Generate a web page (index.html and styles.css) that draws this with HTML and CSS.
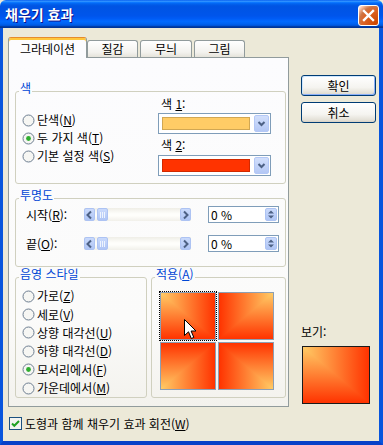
FILE: index.html
```html
<!DOCTYPE html>
<html lang="ko">
<head>
<meta charset="utf-8">
<title>채우기 효과</title>
<link rel="stylesheet" href="styles.css">
</head>
<body>
<svg class="defs" width="0" height="0" aria-hidden="true">
  <defs>
    <linearGradient id="gH" x1="0" y1="0" x2="1" y2="0"><stop offset="0" stop-color="#FFCC66"/><stop offset="1" stop-color="#FF3300"/></linearGradient>
    <linearGradient id="gHr" x1="1" y1="0" x2="0" y2="0"><stop offset="0" stop-color="#FFCC66"/><stop offset="1" stop-color="#FF3300"/></linearGradient>
    <linearGradient id="gV" x1="0" y1="0" x2="0" y2="1"><stop offset="0" stop-color="#FFCC66"/><stop offset="1" stop-color="#FF3300"/></linearGradient>
    <linearGradient id="gVr" x1="0" y1="1" x2="0" y2="0"><stop offset="0" stop-color="#FFCC66"/><stop offset="1" stop-color="#FF3300"/></linearGradient>
  </defs>
</svg>
<div class="window">
  <div class="titlebar">
    <span class="title">채우기 효과</span>
    <span class="close">
      <svg width="21" height="21" viewBox="0 0 21 21"><path d="M6 6 L15 15 M15 6 L6 15" stroke="#fff" stroke-width="2.4" stroke-linecap="square"/></svg>
    </span>
  </div>
  <div class="client">
    <div class="top">
      <div class="tabs-col">
        <div class="tabs">
          <div class="tab active">그라데이션</div>
          <div class="tab t2">질감</div>
          <div class="tab t3">무늬</div>
          <div class="tab t4">그림</div>
        </div>
        <div class="panel">
          <fieldset class="grp colors">
            <legend>색</legend>
            <div class="body">
              <div class="radios">
                <div class="radio"><svg width="13" height="13" viewBox="0 0 13 13"><circle cx="6.5" cy="6.5" r="5.5" fill="#F6F6F3" stroke="#6D7E91"/></svg>단색(<u>N</u>)</div>
                <div class="radio"><svg width="13" height="13" viewBox="0 0 13 13"><circle cx="6.5" cy="6.5" r="5.5" fill="#F6F6F3" stroke="#6D7E91"/><circle cx="6.5" cy="6.5" r="2.4" fill="#2FAE2F"/></svg>두 가지 색(<u>T</u>)</div>
                <div class="radio"><svg width="13" height="13" viewBox="0 0 13 13"><circle cx="6.5" cy="6.5" r="5.5" fill="#F6F6F3" stroke="#6D7E91"/></svg>기본 설정 색(<u>S</u>)</div>
              </div>
              <div class="pickers">
                <div class="lbl">색 <u>1</u>:</div>
                <div class="combo">
                  <span class="swatch sw1"></span>
                  <span class="drop"><svg width="13" height="15" viewBox="0 0 13 15"><path d="M3.5 6 L6.5 9 L9.5 6" stroke="#4D6185" stroke-width="2" fill="none"/></svg></span>
                </div>
                <div class="lbl second">색 <u>2</u>:</div>
                <div class="combo">
                  <span class="swatch sw2"></span>
                  <span class="drop"><svg width="13" height="15" viewBox="0 0 13 15"><path d="M3.5 6 L6.5 9 L9.5 6" stroke="#4D6185" stroke-width="2" fill="none"/></svg></span>
                </div>
              </div>
            </div>
          </fieldset>

          <fieldset class="grp trans">
            <legend>투명도</legend>
            <div class="body">
              <div class="trow">
                <span class="tlabel">시작(<u>R</u>):</span>
                <div class="scroll">
                  <span class="sb-btn"><svg width="9" height="10" viewBox="0 0 9 10"><path d="M6 1.5 L2.5 5 L6 8.5" stroke="#4D6185" stroke-width="2" fill="none"/></svg></span>
                  <span class="sb-btn thumb"><svg width="7" height="6" viewBox="0 0 7 6"><path d="M1.5 0 V6 M3.5 0 V6 M5.5 0 V6" stroke="#EEF4FE" stroke-width="1"/></svg></span>
                  <span class="track"></span>
                  <span class="sb-btn"><svg width="9" height="10" viewBox="0 0 9 10"><path d="M3 1.5 L6.5 5 L3 8.5" stroke="#4D6185" stroke-width="2" fill="none"/></svg></span>
                </div>
                <div class="edit"><span class="val">0 %</span><span class="spin"><svg width="10" height="13" viewBox="0 0 10 13"><path d="M2 5.5 L5 2.5 L8 5.5 Z M2 7.5 L5 10.5 L8 7.5 Z" fill="#4D6185"/></svg></span></div>
              </div>
              <div class="trow">
                <span class="tlabel">끝(<u>O</u>):</span>
                <div class="scroll">
                  <span class="sb-btn"><svg width="9" height="10" viewBox="0 0 9 10"><path d="M6 1.5 L2.5 5 L6 8.5" stroke="#4D6185" stroke-width="2" fill="none"/></svg></span>
                  <span class="sb-btn thumb"><svg width="7" height="6" viewBox="0 0 7 6"><path d="M1.5 0 V6 M3.5 0 V6 M5.5 0 V6" stroke="#EEF4FE" stroke-width="1"/></svg></span>
                  <span class="track"></span>
                  <span class="sb-btn"><svg width="9" height="10" viewBox="0 0 9 10"><path d="M3 1.5 L6.5 5 L3 8.5" stroke="#4D6185" stroke-width="2" fill="none"/></svg></span>
                </div>
                <div class="edit"><span class="val">0 %</span><span class="spin"><svg width="10" height="13" viewBox="0 0 10 13"><path d="M2 5.5 L5 2.5 L8 5.5 Z M2 7.5 L5 10.5 L8 7.5 Z" fill="#4D6185"/></svg></span></div>
              </div>
            </div>
          </fieldset>

          <div class="lower">
            <fieldset class="grp shade">
              <legend>음영 스타일</legend>
              <div class="body">
                <div class="radio"><svg width="13" height="13" viewBox="0 0 13 13"><circle cx="6.5" cy="6.5" r="5.5" fill="#F6F6F3" stroke="#6D7E91"/></svg>가로(<u>Z</u>)</div>
                <div class="radio"><svg width="13" height="13" viewBox="0 0 13 13"><circle cx="6.5" cy="6.5" r="5.5" fill="#F6F6F3" stroke="#6D7E91"/></svg>세로(<u>V</u>)</div>
                <div class="radio"><svg width="13" height="13" viewBox="0 0 13 13"><circle cx="6.5" cy="6.5" r="5.5" fill="#F6F6F3" stroke="#6D7E91"/></svg>상향 대각선(<u>U</u>)</div>
                <div class="radio"><svg width="13" height="13" viewBox="0 0 13 13"><circle cx="6.5" cy="6.5" r="5.5" fill="#F6F6F3" stroke="#6D7E91"/></svg>하향 대각선(<u>D</u>)</div>
                <div class="radio"><svg width="13" height="13" viewBox="0 0 13 13"><circle cx="6.5" cy="6.5" r="5.5" fill="#F6F6F3" stroke="#6D7E91"/><circle cx="6.5" cy="6.5" r="2.4" fill="#2FAE2F"/></svg>모서리에서(<u>F</u>)</div>
                <div class="radio"><svg width="13" height="13" viewBox="0 0 13 13"><circle cx="6.5" cy="6.5" r="5.5" fill="#F6F6F3" stroke="#6D7E91"/></svg>가운데에서(<u>M</u>)</div>
              </div>
            </fieldset>
            <fieldset class="grp variants">
              <legend>적용(<u>A</u>)</legend>
              <div class="body">
                <div class="tiles">
                  <div class="tile focus">
                    <svg viewBox="0 0 100 100" preserveAspectRatio="none"><rect width="100" height="100" fill="url(#gV)"/><polygon points="0,0 100,0 100,100" fill="url(#gH)"/></svg>
                    <svg class="cursor" width="13" height="21" viewBox="0 0 13 21"><path d="M0.5 0.5 L0.5 16.5 L4.5 12.8 L7.3 19.5 L9.8 18.4 L7.1 12 L12 12 Z" fill="#fff" stroke="#000" stroke-width="1"/></svg>
                  </div>
                  <div class="tile">
                    <svg viewBox="0 0 100 100" preserveAspectRatio="none"><rect width="100" height="100" fill="url(#gV)"/><polygon points="0,0 100,0 0,100" fill="url(#gHr)"/></svg>
                  </div>
                  <div class="tile">
                    <svg viewBox="0 0 100 100" preserveAspectRatio="none"><rect width="100" height="100" fill="url(#gVr)"/><polygon points="100,0 100,100 0,100" fill="url(#gH)"/></svg>
                  </div>
                  <div class="tile">
                    <svg viewBox="0 0 100 100" preserveAspectRatio="none"><rect width="100" height="100" fill="url(#gVr)"/><polygon points="0,0 0,100 100,100" fill="url(#gHr)"/></svg>
                  </div>
                </div>
              </div>
            </fieldset>
          </div>
        </div>
      </div>
      <div class="side">
        <div class="btn default">확인</div>
        <div class="btn">취소</div>
        <div class="preview-label">보기:</div>
        <div class="preview">
          <svg viewBox="0 0 100 100" preserveAspectRatio="none"><rect width="100" height="100" fill="url(#gV)"/><polygon points="0,0 100,0 100,100" fill="url(#gH)"/></svg>
        </div>
      </div>
    </div>
    <div class="check">
      <svg width="13" height="13" viewBox="0 0 13 13"><rect x="0.5" y="0.5" width="12" height="12" fill="#F4F4F0" stroke="#1C5180"/><path d="M3 6.5 L5.3 8.8 L10 4" stroke="#21A121" stroke-width="2" fill="none"/></svg>
      <span>도형과 함께 채우기 효과 회전(<u>W</u>)</span>
    </div>
  </div>
</div>
</body>
</html>
```
FILE: styles.css
```css
* { box-sizing: border-box; }
html, body { margin: 0; padding: 0; }
body {
  width: 383px;
  height: 445px;
  overflow: hidden;
  background: #ECE9D8;
  font-family: "Noto Sans CJK KR", "Noto Sans", sans-serif;
  font-size: 12px;
  color: #000;
}
.defs { display: block; width: 0; height: 0; overflow: hidden; }

.window {
  width: 383px;
  height: 445px;
  display: flex;
  flex-direction: column;
}

.titlebar {
  flex: none;
  height: 28px;
  display: flex;
  align-items: flex-start;
  padding: 0 4px 0 5px;
  border-radius: 6px 6px 0 0;
  background: linear-gradient(to bottom, #0058EE 0%, #3593FF 4%, #288EFF 6%, #127DFF 8%, #036FFC 10%, #0262EE 14%, #0057E5 20%, #0054E3 24%, #0055EB 56%, #005BF5 66%, #026AFE 76%, #0062EF 86%, #0052D6 92%, #0040AB 94%, #003092 100%);
}
.title {
  flex: 1;
  padding-top: 6px;
  line-height: 17px;
  color: #fff;
  font-weight: bold;
  font-size: 14px;
  text-shadow: 1px 1px #0F1089;
}
.close {
  margin-top: 5px;
  width: 21px;
  height: 21px;
  border: 1px solid #fff;
  border-radius: 3px;
  display: flex;
  align-items: center;
  justify-content: center;
  background: radial-gradient(circle at 90% 90%, #CC4600 0%, #DC6527 55%, #CD7546 70%, #FFCCB2 90%, #fff 100%);
}
.close svg { display: block; margin: -1px; }

.client {
  flex: 1;
  background: #ECE9D8;
  border-left: 3px solid #0855DD;
  border-right: 4px solid #0855DD;
  border-bottom: 4px solid #0841C8;
  padding: 9px 0 0 5px;
}

.top { display: flex; height: 370px; }
.tabs-col { width: 281px; display: flex; flex-direction: column; }

.tabs {
  display: flex;
  align-items: flex-end;
  height: 21px;
  margin-bottom: -1px;
  position: relative;
  z-index: 1;
}
.tab {
  height: 17px;
  margin-bottom: 1px;
  border: 1px solid #919B9C;
  border-bottom: none;
  border-radius: 3px 3px 0 0;
  background: linear-gradient(#FFFFFF, #F3F2EE 70%, #E5E3DA);
  display: flex;
  align-items: center;
  justify-content: center;
  line-height: 14px;
}
.tab.active {
  width: 79px;
  height: 21px;
  margin-bottom: 0;
  border-top: 1px solid #E68B2C;
  background: #FCFCFE;
  box-shadow: inset 0 2px #FFC73C;
  padding-top: 2px;
}
.t2 { width: 51px; }
.t3 { width: 52px; margin-left: 2px; }
.t4 { width: 51px; margin-left: 2px; }

.panel {
  height: 350px;
  border: 1px solid #919B9C;
  background: linear-gradient(#FCFCFE 0%, #FBFBFA 75%, #F3F2ED 100%);
  padding: 23px 2px 0 6px;
}

.grp {
  margin: 0;
  padding: 0;
  min-width: 0;
  border: 1px solid #D0D0BF;
  border-radius: 3px;
}
.grp legend {
  margin-left: 3px;
  padding: 0 1px 6px;
  margin-bottom: -6px;
  line-height: 14px;
  color: #0046D5;
}

.radio {
  display: flex;
  align-items: center;
  height: 18px;
  line-height: 14px;
  white-space: nowrap;
}
.radio svg { flex: none; margin-right: 2px; }

.colors .body { display: flex; padding: 0 0 7px 6px; }
.colors .radios { width: 136px; padding-top: 16px; }
.pickers { padding-top: 2px; }
.lbl { line-height: 14px; padding-left: 3px; }
.lbl.second { margin-top: 4px; }
.combo {
  margin-top: 2px;
  width: 113px;
  height: 21px;
  border: 1px solid #7F9DB9;
  background: #fff;
  display: flex;
  align-items: center;
  padding: 0 1px 0 3px;
}
.lbl.second + .combo { margin-top: 3px; }
.swatch {
  flex: 1;
  height: 13px;
  margin-right: 4px;
  border: 1px solid rgba(0, 0, 0, 0.18);
}
.sw1 { background: #FFCC66; }
.sw2 { background: #FF3300; }
.drop {
  flex: none;
  width: 15px;
  height: 17px;
  border: 1px solid #B4C8F6;
  border-radius: 2px;
  background: linear-gradient(#D2DFFC, #B4C8F5);
  display: flex;
  align-items: center;
  justify-content: center;
}

.trans { margin-top: 4px; }
.trans .body { padding: 4px 0 14px 10px; }
.trow { display: flex; align-items: center; height: 17px; }
.trow + .trow { margin-top: 12px; }
.tlabel { width: 58px; line-height: 14px; white-space: nowrap; }
.scroll {
  width: 107px;
  height: 13px;
  display: flex;
  align-items: center;
  background: linear-gradient(#EFEEE7, #FEFEFB 45%, #FEFEFB 60%, #F1F0EA);
}
.sb-btn {
  flex: none;
  width: 11px;
  height: 13px;
  border: 1px solid #ADC3F3;
  border-radius: 2px;
  background: linear-gradient(#CADAFC, #AFC5F5);
  display: flex;
  align-items: center;
  justify-content: center;
}
.sb-btn.thumb { margin-left: 2px; }
.track { flex: 1; }
.edit {
  margin-left: 17px;
  width: 71px;
  height: 17px;
  border: 1px solid #7F9DB9;
  background: #fff;
  display: flex;
  align-items: center;
  padding-left: 2px;
}
.val { line-height: 14px; white-space: pre; }
.spin {
  margin-left: auto;
  margin-right: 1px;
  width: 12px;
  height: 13px;
  border: 1px solid #ADC3F3;
  border-radius: 2px;
  background: linear-gradient(#CADAFC, #AFC5F5);
  display: flex;
  align-items: center;
  justify-content: center;
}

.lower { display: flex; gap: 4px; }
.shade { width: 132px; flex: none; }
.shade .body { padding: 6px 0 0 6px; }
.shade .radio { height: 18.4px; }
.variants { flex: 1; }
.variants .body { padding: 11px 0 7px 8px; }
.tiles {
  display: grid;
  grid-template-columns: 56px 56px;
  grid-auto-rows: 48px;
  gap: 2px;
}
.tile {
  border: 1px solid #8C9FB4;
  position: relative;
}
.tile svg { display: block; width: 100%; height: 100%; }
.tile.focus { outline: 1px dotted #000; }
.tile svg.cursor {
  position: absolute;
  left: 23px;
  top: 26px;
  width: 13px;
  height: 21px;
}

.side {
  width: 76px;
  margin-left: 12px;
  display: flex;
  flex-direction: column;
  padding: 38px 0 3px 0;
}
.btn {
  width: 75px;
  height: 21px;
  border: 1px solid #003C74;
  border-radius: 3px;
  background: linear-gradient(#FFFFFF, #F5F4F0 60%, #E3E0D6 90%, #D6D0C5);
  display: flex;
  align-items: center;
  justify-content: center;
  line-height: 14px;
}
.btn.default { box-shadow: inset 1px 1px #CEE7FF, inset -1px -1px #8CB0F8; }
.btn + .btn { margin-top: 6px; }
.preview-label { margin-top: auto; line-height: 14px; }
.preview {
  margin: 7px 0 0 1px;
  width: 68px;
  height: 58px;
  border: 1px solid #1A1A1A;
}
.preview svg { display: block; width: 100%; height: 100%; }

.check {
  margin-top: 9px;
  height: 15px;
  display: flex;
  align-items: center;
  padding-left: 1px;
  line-height: 14px;
}
.check svg { flex: none; margin-right: 3px; }
```
